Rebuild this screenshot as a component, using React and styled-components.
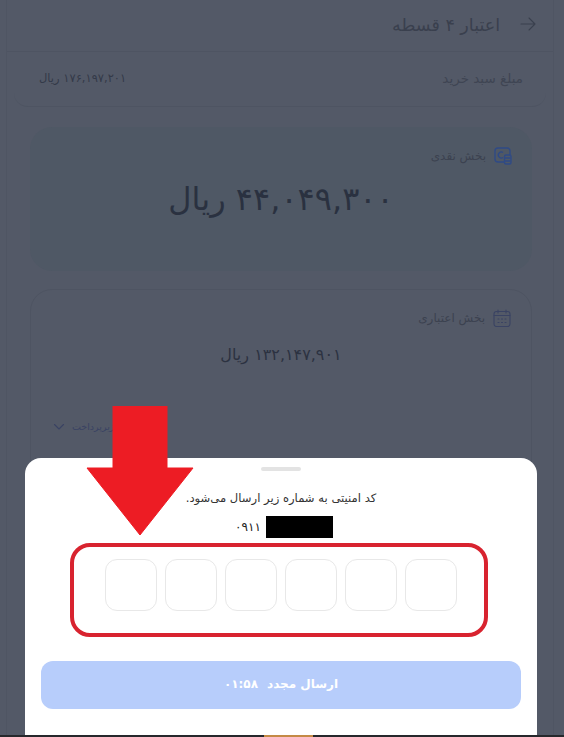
import React from 'react';
import styled, { createGlobalStyle } from 'styled-components';

const GlobalStyle = createGlobalStyle`
    html, body {
        margin: 0;
        padding: 0;
        background: #535967;
    }
    * {
        box-sizing: border-box;
    }
`

const App = () => {
    const boxes = [1, 2, 3, 4, 5, 6];

    return (
        <Page dir='rtl'>
            <GlobalStyle />
            <Shell>
                <Header>
                    <svg width='16' height='16' viewBox='0 0 16 16' fill='none' stroke='#3a404e' strokeWidth='1.1' strokeLinecap='round' strokeLinejoin='round'>
                        <path d='M1 8h14M9 2l6 6-6 6' />
                    </svg>
                    <Title>اعتبار ۴ قسطه</Title>
                </Header>
                <TotalRow>
                    <TotalLabel>مبلغ سبد خرید</TotalLabel>
                    <TotalValue>۱۷۶,۱۹۷,۲۰۱ ریال</TotalValue>
                </TotalRow>
                <CashCard>
                    <CardHead>
                        <svg width='18' height='18' viewBox='0 0 18 18' fill='none' stroke='#2f4a86' strokeWidth='1.4' strokeLinejoin='round'>
                            <rect x='1' y='1' width='15' height='14' rx='3' />
                            <path d='M9 5.5a3 3 0 1 0 0 5' />
                            <rect x='10.5' y='8' width='6.5' height='9' rx='1.5' fill='#4f5865' />
                            <path d='M11 11h5.5M11 14h5.5' />
                        </svg>
                        <CardLabel>بخش نقدی</CardLabel>
                    </CardHead>
                    <CashAmount>۴۴,۰۴۹,۳۰۰ ریال</CashAmount>
                </CashCard>
                <CreditCard>
                    <CardHead>
                        <svg width='18' height='18' viewBox='0 0 18 18' fill='none' stroke='#3a4363' strokeWidth='1.1' strokeLinecap='round'>
                            <rect x='1' y='2.5' width='16' height='15' rx='2.5' />
                            <path d='M1 6.5h16M5 1v3M13 1v3' />
                            <path d='M5 10h1M8.5 10h1M12 10h1M5 13.5h1M8.5 13.5h1M12 13.5h1' />
                        </svg>
                        <CardLabel>بخش اعتباری</CardLabel>
                    </CardHead>
                    <CreditAmount>۱۳۲,۱۴۷,۹۰۱ ریال</CreditAmount>
                    <Details>
                        <DetailsText>اقساط و زیرپرداخت</DetailsText>
                        <svg width='12' height='8' viewBox='0 0 12 8' fill='none' stroke='#3a4363' strokeWidth='1.1' strokeLinecap='round' strokeLinejoin='round'>
                            <path d='M1.5 1.5L6 6l4.5-4.5' />
                        </svg>
                    </Details>
                </CreditCard>
            </Shell>

            <Sheet>
                <Handle />
                <Message>کد امنیتی به شماره زیر ارسال می‌شود.</Message>
                <Phone dir='ltr'>
                    <PhoneDigits>۰۹۱۱</PhoneDigits>
                    <Redacted />
                </Phone>
                <CodeRow dir='ltr'>
                    {boxes.map((box) => {
                        return <CodeBox key={box} />
                    })}
                </CodeRow>
                <ResendButton disabled>
                    <span>ارسال مجدد</span>
                    <span>۰۱:۵۸</span>
                </ResendButton>
            </Sheet>

            <Highlight />
            <Arrow width='108' height='130' viewBox='0 0 108 130'>
                <path d='M27 0h54v62h26L54 129 1 62h26z' fill='#ed1c24' stroke='#ed1c24' strokeWidth='1' strokeLinejoin='round' />
            </Arrow>

            <BottomEdge>
                <BottomTab />
            </BottomEdge>
        </Page>
    )
}

const Page = styled.div`
    position: relative;
    width: 564px;
    height: 737px;
    overflow: hidden;
    background: #535967;
    font-family: "DejaVu Sans", "Noto Sans", sans-serif;
    color: #343a49;
`

const Shell = styled.main`
    margin: 0 10px 0 6px;
    height: 737px;
    border-left: 1px solid #4f5563;
    border-right: 1px solid #4f5563;
    display: flex;
    flex-direction: column;
`

const Header = styled.header`
    height: 52px;
    flex-shrink: 0;
    padding: 16px 17px 0 0;
    display: flex;
    align-items: flex-start;
    gap: 20px;
    border-bottom: 1px solid #4e5462;
`

const Title = styled.h1`
    margin: 0;
    font-size: 17.5px;
    line-height: 18px;
    font-weight: 400;
    color: #3a404e;
`

const TotalRow = styled.section`
    height: 55px;
    flex-shrink: 0;
    margin: 0 7px 0 7px;
    padding: 0 23px 3px 25px;
    display: flex;
    align-items: center;
    justify-content: space-between;
    border-bottom: 1px solid #4e5462;
    border-radius: 0 0 14px 14px;
`

const TotalLabel = styled.span`
    font-size: 13.5px;
    color: #3f4553;
`

const TotalValue = styled.span`
    font-size: 11.5px;
    color: #343a49;
`

const CashCard = styled.section`
    height: 144px;
    flex-shrink: 0;
    margin: 20px 21px 0 23px;
    padding: 20px 20px 0;
    background: #4f5865;
    border-radius: 22px;
`

const CreditCard = styled.section`
    height: 300px;
    flex-shrink: 0;
    margin: 18px 21px 0 23px;
    padding: 19px 20px 0 20px;
    border: 1px solid #4e5462;
    border-radius: 22px;
`

const CardHead = styled.div`
    display: flex;
    align-items: center;
    gap: 8px;
`

const CardLabel = styled.span`
    font-size: 12px;
    color: #3c4250;
`

const CashAmount = styled.div`
    margin-top: 14px;
    text-align: center;
    font-size: 32px;
    line-height: 40px;
    color: #2a3140;
`

const CreditAmount = styled.div`
    margin-top: 16px;
    text-align: center;
    font-size: 16px;
    line-height: 24px;
    color: #2c3241;
`

const Details = styled.div`
    margin-top: 54px;
    padding-left: 2px;
    display: flex;
    justify-content: flex-end;
    align-items: center;
    gap: 7px;
`

const DetailsText = styled.span`
    font-size: 9.5px;
    color: #3a4363;
`

const Sheet = styled.section`
    position: absolute;
    left: 25px;
    top: 458px;
    width: 512px;
    height: 279px;
    padding: 9px 16px 0;
    background: #fff;
    border-radius: 16px 16px 0 0;
    display: flex;
    flex-direction: column;
    align-items: center;
`

const Handle = styled.div`
    width: 40px;
    height: 4px;
    border-radius: 2px;
    background: #e3e3e3;
`

const Message = styled.p`
    margin: 19px 0 0;
    font-size: 11.6px;
    line-height: 16px;
    color: #333;
`

const Phone = styled.div`
    margin-top: 10px;
    margin-left: 6px;
    height: 22px;
    display: flex;
    align-items: center;
    gap: 5px;
`

const PhoneDigits = styled.span`
    font-size: 12px;
    color: #222;
`

const Redacted = styled.div`
    width: 67px;
    height: 22px;
    background: #000;
`

const CodeRow = styled.div`
    margin-top: 21px;
    display: flex;
    gap: 8px;
`

const CodeBox = styled.div`
    width: 52px;
    height: 52px;
    border: 1px solid #e8e8e8;
    border-radius: 12px;
`

const ResendButton = styled.button`
    margin-top: 50px;
    width: 480px;
    height: 48px;
    padding: 0 0 3px;
    border: none;
    border-radius: 12px;
    background: #b7cdfb;
    color: #fff;
    font-family: inherit;
    font-size: 12px;
    font-weight: 700;
    display: flex;
    align-items: center;
    justify-content: center;
    gap: 9px;
`

const Highlight = styled.div`
    position: absolute;
    left: 70px;
    top: 543px;
    width: 418px;
    height: 94px;
    border: 4.5px solid #d8232f;
    border-radius: 20px;
`

const Arrow = styled.svg`
    position: absolute;
    left: 86px;
    top: 406px;
`

const BottomEdge = styled.div`
    position: absolute;
    left: 0;
    bottom: 0;
    width: 100%;
    height: 2px;
    background: #26282c;
`

const BottomTab = styled.div`
    position: absolute;
    left: 264px;
    top: 0;
    width: 49px;
    height: 2px;
    background: #c48a45;
`

export default App;
